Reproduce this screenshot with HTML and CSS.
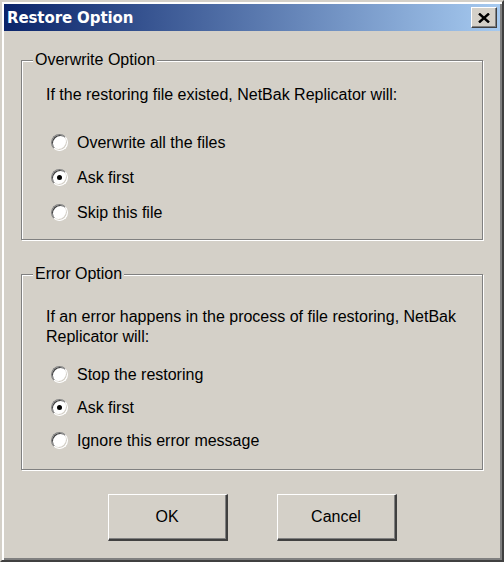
FILE: index.html
```html
<!DOCTYPE html>
<html>
<head>
<meta charset="utf-8">
<link rel="stylesheet" href="styles.css">
</head>
<body>
<div class="window">
  <div class="titlebar">
    <span class="title">Restore Option</span>
    <span class="close"><svg width="12" height="10" viewBox="0 0 12 10"><path d="M1 0.5 L11 9.5 M11 0.5 L1 9.5" stroke="#000" stroke-width="2.4" fill="none"/></svg></span>
  </div>
  <div class="content">
    <div class="group group-overwrite">
      <span class="group-title">Overwrite Option</span>
      <p class="desc">If the restoring file existed, NetBak Replicator will:</p>
      <div class="options options-overwrite">
        <div class="option"><span class="radio"></span>Overwrite all the files</div>
        <div class="option"><span class="radio checked"></span>Ask first</div>
        <div class="option"><span class="radio"></span>Skip this file</div>
      </div>
    </div>
    <div class="group group-error">
      <span class="group-title">Error Option</span>
      <p class="desc">If an error happens in the process of file restoring, NetBak<br>Replicator will:</p>
      <div class="options options-error">
        <div class="option"><span class="radio"></span>Stop the restoring</div>
        <div class="option"><span class="radio checked"></span>Ask first</div>
        <div class="option"><span class="radio"></span>Ignore this error message</div>
      </div>
    </div>
    <div class="buttons">
      <div class="btn">OK</div>
      <div class="btn">Cancel</div>
    </div>
  </div>
</div>
</body>
</html>
```
FILE: styles.css
```css
html, body {
  margin: 0;
  padding: 0;
  background: #d4d0c8;
}
.window {
  width: 504px;
  height: 562px;
  box-sizing: border-box;
  border: 2px solid;
  border-color: #d4d0c8 #404040 #404040 #d4d0c8;
  box-shadow: inset 2px 2px 0 #fff, inset -2px -2px 0 #808080;
  padding: 2px;
  background: #d4d0c8;
  display: flex;
  flex-direction: column;
  font-family: "Liberation Sans", Arial, sans-serif;
  font-size: 16px;
  color: #000;
}
.titlebar {
  height: 27px;
  flex: none;
  box-sizing: border-box;
  padding: 0 3px;
  display: flex;
  align-items: center;
  justify-content: space-between;
  background: linear-gradient(to right, #0a246a, #a6caf0);
}
.title {
  color: #fff;
  font-family: "DejaVu Sans", sans-serif;
  font-weight: bold;
  font-size: 15px;
  letter-spacing: -0.1px;
}
.close {
  width: 26px;
  height: 21px;
  box-sizing: border-box;
  background: #d4d0c8;
  border: 1px solid;
  border-color: #fff #404040 #404040 #fff;
  box-shadow: inset -1px -1px 0 #808080;
  display: flex;
  align-items: center;
  justify-content: center;
}
.content {
  padding: 29px 17px 0;
  display: flex;
  flex-direction: column;
}
.group {
  position: relative;
  border: 1px solid #808080;
  box-shadow: inset 1px 1px 0 #fff, 1px 1px 0 #fff;
  padding-left: 24px;
  padding-right: 8px;
}
.group-title {
  position: absolute;
  top: -10px;
  left: 11px;
  padding: 0 2px;
  line-height: 18px;
  background: #d4d0c8;
}
.group-overwrite {
  padding-top: 24px;
  padding-bottom: 9px;
}
.group-error {
  margin-top: 34px;
  padding-top: 32px;
  padding-bottom: 12px;
}
.desc {
  margin: 0;
  line-height: 20px;
  white-space: nowrap;
}
.options-overwrite {
  margin-top: 20px;
}
.options-overwrite .option {
  height: 35px;
}
.options-error {
  margin-top: 11px;
}
.options-error .option {
  height: 33px;
}
.option {
  display: flex;
  align-items: center;
  padding-left: 5px;
}
.radio {
  position: relative;
  width: 17px;
  height: 17px;
  box-sizing: border-box;
  border-radius: 50%;
  background: #fff;
  border: 1px solid;
  border-color: #808080 #fff #fff #808080;
  box-shadow: inset 1px 1px 0 #404040, inset -1px -1px 0 #d4d0c8;
  margin-right: 9px;
  flex: none;
}
.radio.checked::after {
  content: "";
  position: absolute;
  left: 5px;
  top: 5px;
  width: 5px;
  height: 5px;
  border-radius: 50%;
  background: #000;
}
.buttons {
  margin-top: 24px;
  display: flex;
  justify-content: center;
  gap: 49px;
}
.btn {
  width: 120px;
  height: 47px;
  box-sizing: border-box;
  border-style: solid;
  border-width: 1px 2px 2px 1px;
  border-color: #fff #404040 #404040 #fff;
  box-shadow: inset -1px -1px 0 #808080;
  display: flex;
  align-items: center;
  justify-content: center;
}
```
